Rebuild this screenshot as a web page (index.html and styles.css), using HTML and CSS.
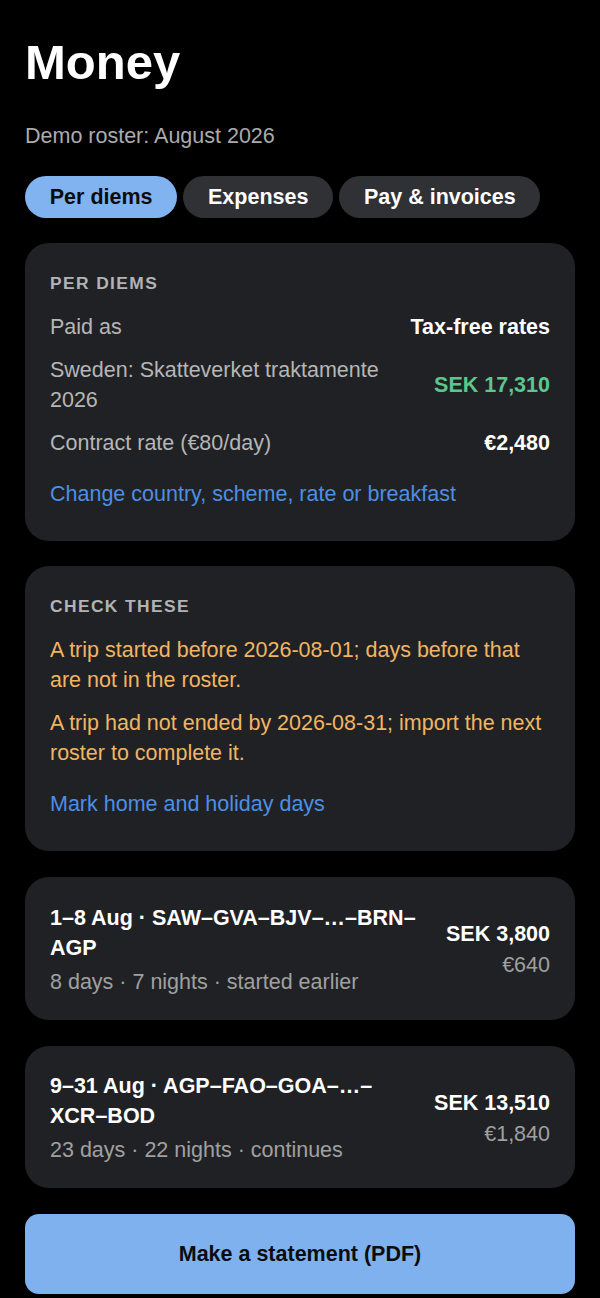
FILE: index.html
```html
<!DOCTYPE html>
<html lang="en">
<head>
    <meta charset="UTF-8">
    <title>Money</title>
    <link rel="stylesheet" href="styles.css">
</head>
<body>
<div class="page">
    <h1 class="title">Money</h1>
    <p class="subtitle">Demo roster: August 2026</p>

    <div class="tabs">
        <button class="tab active">Per diems</button>
        <button class="tab">Expenses</button>
        <button class="tab">Pay &amp; invoices</button>
    </div>

    <section class="card">
        <h2 class="card-head">PER DIEMS</h2>
        <div class="rows">
            <div class="row">
                <span class="label">Paid as</span>
                <span class="value">Tax-free rates</span>
            </div>
            <div class="row">
                <span class="label">Sweden: Skatteverket traktamente 2026</span>
                <span class="value green">SEK 17,310</span>
            </div>
            <div class="row">
                <span class="label">Contract rate (€80/day)</span>
                <span class="value">€2,480</span>
            </div>
        </div>
        <a class="link" href="#">Change country, scheme, rate or breakfast</a>
    </section>

    <section class="card">
        <h2 class="card-head">CHECK THESE</h2>
        <div class="rows">
            <p class="warn">A trip started before 2026-08-01; days before that are not in the roster.</p>
            <p class="warn">A trip had not ended by 2026-08-31; import the next roster to complete it.</p>
        </div>
        <a class="link" href="#">Mark home and holiday days</a>
    </section>

    <section class="card trip">
        <div class="trip-main">
            <div class="trip-title">1–8 Aug · SAW–GVA–BJV–…–BRN–AGP</div>
            <div class="trip-sub">8 days · 7 nights · started earlier</div>
        </div>
        <div class="trip-sum">
            <div class="sek">SEK 3,800</div>
            <div class="eur">€640</div>
        </div>
    </section>

    <section class="card trip">
        <div class="trip-main">
            <div class="trip-title">9–31 Aug · AGP–FAO–GOA–…–XCR–BOD</div>
            <div class="trip-sub">23 days · 22 nights · continues</div>
        </div>
        <div class="trip-sum">
            <div class="sek">SEK 13,510</div>
            <div class="eur">€1,840</div>
        </div>
    </section>

    <button class="statement">Make a statement (PDF)</button>
</div>
</body>
</html>
```

FILE: styles.css
```css
body {
    margin: 0;
    background-color: #000;
    color: #fff;
    font-family: "Liberation Sans", Arial, sans-serif;
    font-size: 21.5px;
    line-height: 30px;
}

.page {
    padding: 0 25px 40px;
}

.title {
    margin: 34px 0 0;
    font-size: 49px;
    line-height: 56px;
    font-weight: bold;
}

.subtitle {
    margin: 31px 0 0;
    color: #ababab;
}

.tabs {
    display: flex;
    gap: 6px;
    margin-top: 25px;
}

.tab {
    padding: 6px 24.75px;
    border: none;
    border-radius: 21px;
    background-color: #303134;
    color: #fff;
    font-family: inherit;
    font-size: 21.5px;
    line-height: 30px;
    font-weight: bold;
}

.tab.active {
    background-color: #80b3f0;
    color: #0c0c0c;
}

.card {
    margin-top: 25px;
    padding: 28px 25px 32px;
    border-radius: 24px;
    background-color: #202124;
}

.card-head {
    margin: 0 0 17px;
    font-size: 17.4px;
    line-height: 24px;
    letter-spacing: 0.08em;
    color: #b1b3b6;
}

.rows {
    display: flex;
    flex-direction: column;
    gap: 13px;
}

.row {
    display: flex;
    align-items: center;
    gap: 20px;
}

.label {
    flex: 1;
    color: #b6b6b6;
}

.value {
    white-space: nowrap;
    font-weight: bold;
}

.green {
    color: #5ac88a;
}

.warn {
    margin: 0;
    color: #f1b562;
}

.link {
    display: block;
    margin-top: 21px;
    color: #4c8fe5;
    text-decoration: none;
}

.trip {
    display: flex;
    align-items: center;
    gap: 20px;
    margin-top: 26px;
    padding: 25.5px 25px 23px;
}

.trip-main {
    flex: 1;
}

.trip-title {
    font-weight: bold;
}

.trip-sub {
    margin-top: 4px;
    color: #a0a0a0;
}

.trip-sum {
    text-align: right;
    white-space: nowrap;
}

.sek {
    font-weight: bold;
}

.eur {
    margin-top: 1px;
    color: #a0a0a0;
}

.statement {
    display: block;
    width: 100%;
    margin-top: 26px;
    height: 80px;
    border: none;
    border-radius: 14px;
    background-color: #7fb1ee;
    color: #0c0c0c;
    font-family: inherit;
    font-size: 21.5px;
    font-weight: bold;
}
```
